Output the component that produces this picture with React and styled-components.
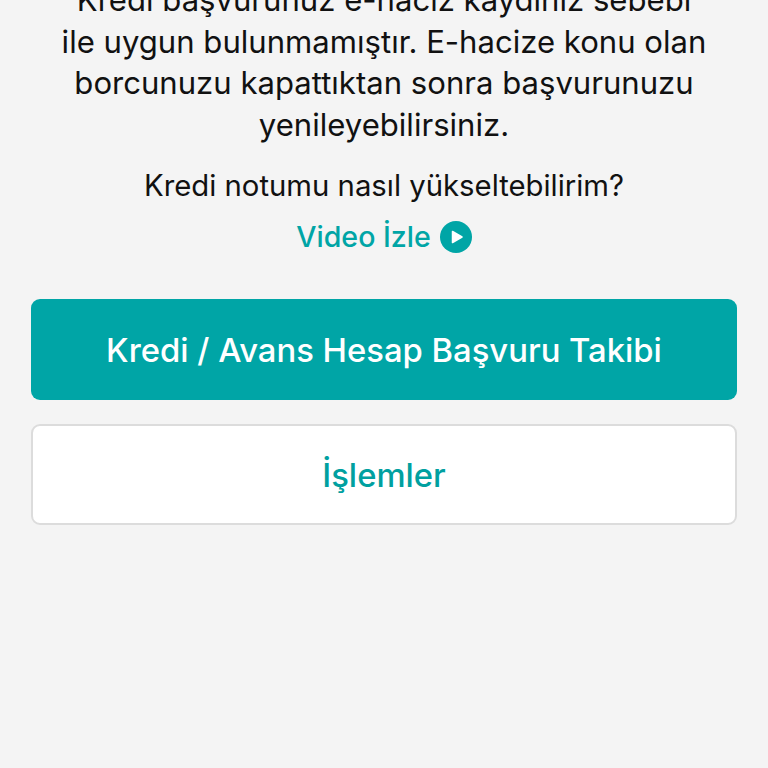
import styled, { createGlobalStyle } from "styled-components";

const GlobalStyle = createGlobalStyle`
  html, body {
    margin: 0;
    padding: 0;
    background: #f4f4f4;
  }
  body {
    font-family: Inter, "Liberation Sans", sans-serif;
  }
`;

const Page = styled.div`
  width: 768px;
  height: 768px;
  overflow: hidden;
  background: #f4f4f4;
  display: flex;
  flex-direction: column;
  align-items: center;
`;

const Message = styled.p`
  margin: -20px 0 0;
  width: 700px;
  font-size: 31.1px;
  line-height: 41.5px;
  text-align: center;
  color: #111;
`;

const Question = styled.p`
  margin: 19px 0 0;
  font-size: 29.3px;
  line-height: 42px;
  color: #111;
`;

const VideoLink = styled.a`
  margin-top: 9px;
  display: flex;
  align-items: center;
  gap: 9px;
  font-size: 28.6px;
  font-weight: 500;
  line-height: 42px;
  color: #00a5a6;
`;

const Actions = styled.div`
  margin-top: 41px;
  width: 706px;
  display: flex;
  flex-direction: column;
  gap: 24px;
`;

const Button = styled.button`
  box-sizing: border-box;
  height: 101px;
  border-radius: 9px;
  font-family: inherit;
  font-size: 32.8px;
  font-weight: 500;
  border: ${({ $primary }) => ($primary ? "none" : "2px solid #dcdcdc")};
  background: ${({ $primary }) => ($primary ? "#00a5a6" : "#fff")};
  color: ${({ $primary }) => ($primary ? "#fff" : "#00a0a0")};
`;

function PlayIcon() {
  return (
    <svg width="32" height="32" viewBox="0 0 32 32">
      <circle cx="16" cy="16" r="16" fill="#00a5a6" />
      <path d="M12.5 10.5 L22 16 L12.5 21.5 Z" fill="#fff" stroke="#fff" strokeWidth="1.5" strokeLinejoin="round" />
    </svg>
  );
}

export default function App() {
  return (
    <Page>
      <GlobalStyle />
      <Message>
        Kredi başvurunuz e-haciz kaydınız sebebi
        <br />
        ile uygun bulunmamıştır. E-hacize konu olan borcunuzu kapattıktan sonra başvurunuzu
        yenileyebilirsiniz.
      </Message>
      <Question>Kredi notumu nasıl yükseltebilirim?</Question>
      <VideoLink>
        Video İzle
        <PlayIcon />
      </VideoLink>
      <Actions>
        <Button $primary>Kredi / Avans Hesap Başvuru Takibi</Button>
        <Button>İşlemler</Button>
      </Actions>
    </Page>
  );
}
